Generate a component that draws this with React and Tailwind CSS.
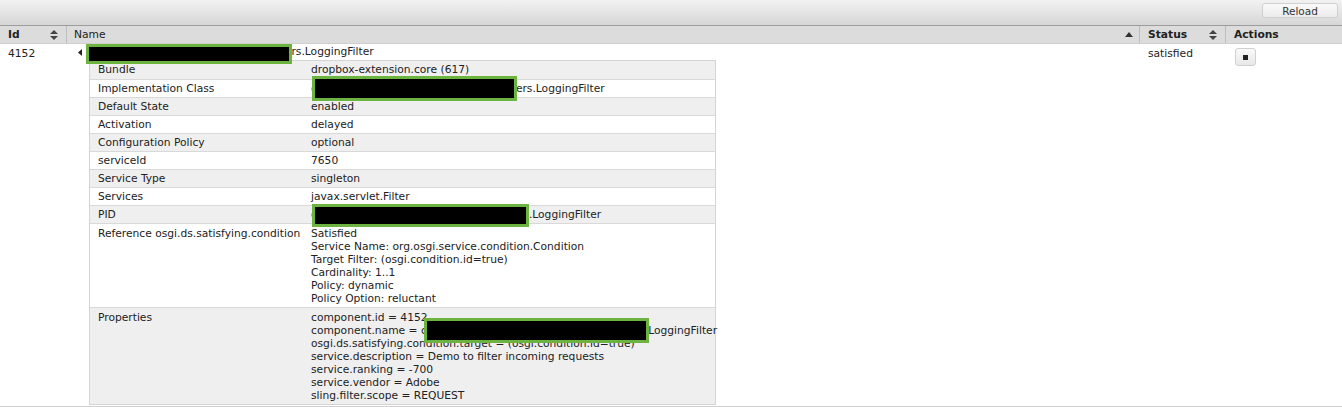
import React from 'react';

const font = { fontFamily: "'DejaVu Sans', Verdana, sans-serif" };

// Redaction box drawn over the text, as in the screenshot
function Redact({ className }) {
  return <div className={`absolute bg-black border-[3px] border-[#6db33f] ${className}`} />;
}

// Text whose middle part is hidden under a redaction box
function Hidden({ pre, gap, post }) {
  return (
    <span className="inline-flex whitespace-nowrap">
      <span>{pre}</span>
      <span className={`inline-block ${gap}`} />
      <span>{post}</span>
    </span>
  );
}

function SortBoth() {
  return (
    <svg width="8" height="10" viewBox="0 0 8 10" className="shrink-0">
      <path d="M4 0 L8 4 L0 4 Z" fill="#444" />
      <path d="M0 6 L8 6 L4 10 Z" fill="#444" />
    </svg>
  );
}

const rows = [
  ['Bundle', ['dropbox-extension.core (617)']],
  ['Implementation Class', [<Hidden key="ic" pre="c" gap="w-[199px]" post="ers.LoggingFilter" />]],
  ['Default State', ['enabled']],
  ['Activation', ['delayed']],
  ['Configuration Policy', ['optional']],
  ['serviceId', ['7650']],
  ['Service Type', ['singleton']],
  ['Services', ['javax.servlet.Filter']],
  ['PID', [<Hidden key="pid" pre="c" gap="w-[212px]" post=".LoggingFilter" />]],
  [
    'Reference osgi.ds.satisfying.condition',
    [
      'Satisfied',
      'Service Name: org.osgi.service.condition.Condition',
      'Target Filter: (osgi.condition.id=true)',
      'Cardinality: 1..1',
      'Policy: dynamic',
      'Policy Option: reluctant',
    ],
  ],
  [
    'Properties',
    [
      'component.id = 4152',
      <Hidden key="cn" pre="component.name = c" gap="w-[218px]" post=".LoggingFilter" />,
      'osgi.ds.satisfying.condition.target = (osgi.condition.id=true)',
      'service.description = Demo to filter incoming requests',
      'service.ranking = -700',
      'service.vendor = Adobe',
      'sling.filter.scope = REQUEST',
    ],
  ],
];

export default function App() {
  return (
    <div className="relative w-[1342px] h-[407px] bg-white text-[10.7px] text-[#222] overflow-hidden" style={font}>
      {/* Toolbar */}
      <div className="h-[26px] flex items-start justify-end px-1 pt-[3px] bg-gradient-to-b from-[#f2f2f2] to-[#d6d6d6] border-b border-[#9d9d9d]">
        <button className="w-[76px] h-[15px] leading-[14px] text-[#333] text-[10.5px] rounded-[3px] bg-gradient-to-b from-[#fafafa] to-[#ececec] border border-[#d0d0d0]">
          Reload
        </button>
      </div>

      {/* Header row */}
      <div className="flex h-[18px] bg-[#dcdcdc] border-b border-[#cfcfcf] text-[#222] leading-[18px]">
        <div className="w-[67px] flex items-center justify-between pl-2 pr-2 border-r border-[#bdbdbd] font-bold">
          <span>Id</span>
          <SortBoth />
        </div>
        <div className="flex-1 flex items-center justify-between pl-[7px] pr-[6px] border-r border-[#bdbdbd]">
          <span>Name</span>
          <svg width="8" height="5" viewBox="0 0 8 5"><path d="M4 0 L8 5 L0 5 Z" fill="#333" /></svg>
        </div>
        <div className="w-[86px] flex items-center justify-between pl-2 pr-2 border-r border-[#bdbdbd] font-bold">
          <span>Status</span>
          <SortBoth />
        </div>
        <div className="w-[116px] pl-2 font-bold">Actions</div>
      </div>

      {/* Body row */}
      <div className="flex border-b-2 border-[#cfcfcf]">
        <div className="w-[67px] pl-2 pt-[2px]">4152</div>
        <div className="flex-1 pt-[2px]">
          <div className="flex items-center h-[13px] pl-[11px]">
            <svg width="4" height="7" viewBox="0 0 4 7" className="mr-[5px]"><path d="M4 0 L4 7 L0 3.5 Z" fill="#222" /></svg>
            <Hidden pre="c" gap="w-[192px]" post="ers.LoggingFilter" />
          </div>
          <div className="ml-[22px] mt-[1px] mb-[1px] w-[627px] border border-[#d4d4d4]">
            {rows.map(([label, values], i) => (
              <div
                key={label}
                className={`flex border-t border-[#d9d9d9] first:border-t-0 leading-[13px] ${i % 2 === 0 ? 'bg-[#efefef]' : 'bg-white'} ${values.length > 1 ? 'pt-[3px] pb-[2px]' : 'h-[18px] pt-[2px]'}`}
              >
                <div className="w-[221px] pl-[8px] shrink-0 whitespace-nowrap">{label}</div>
                <div className="flex flex-col whitespace-nowrap">
                  {values.map((v, j) => (
                    <span key={j}>{v}</span>
                  ))}
                </div>
              </div>
            ))}
          </div>
        </div>
        <div className="w-[86px] pl-2 pt-[2px]">satisfied</div>
        <div className="w-[116px] pl-[9px] pt-[4px]">
          <div className="w-[21px] h-[18px] flex items-center justify-center rounded-[3px] border border-[#d0d0d0] bg-gradient-to-b from-[#fafafa] to-[#e8e8e8]">
            <div className="w-[5px] h-[5px] bg-[#222]" />
          </div>
        </div>
      </div>

      {/* Redactions */}
      <Redact className="left-[86px] top-[44px] w-[206px] h-[20px]" />
      <Redact className="left-[312px] top-[76px] w-[205px] h-[25px]" />
      <Redact className="left-[312px] top-[204px] w-[217px] h-[23px]" />
      <Redact className="left-[424px] top-[318px] w-[225px] h-[25px]" />
    </div>
  );
}
